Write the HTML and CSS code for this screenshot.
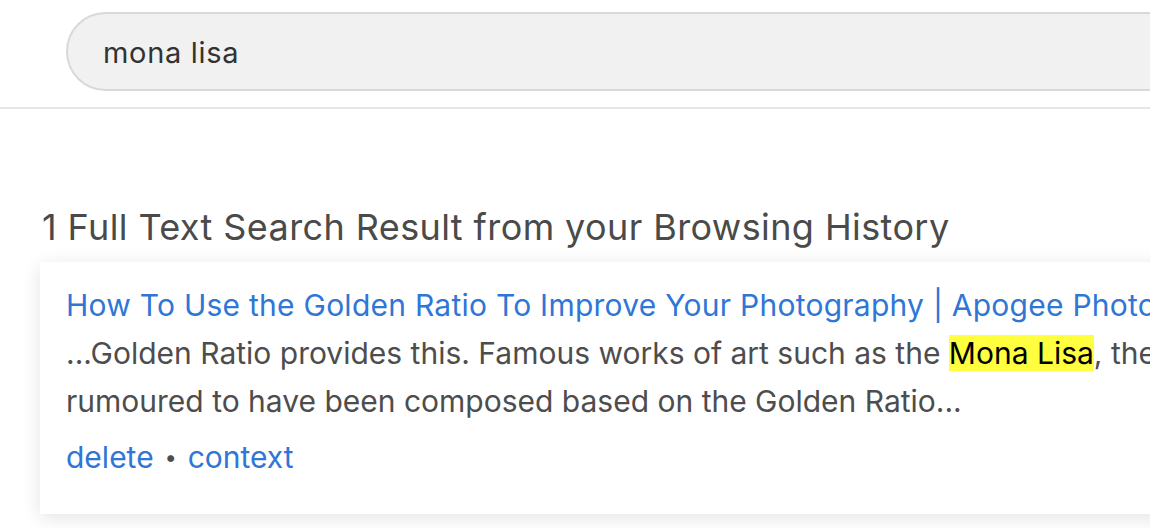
FILE: index.html
```html
<!DOCTYPE html>
<html>
<head>
<meta charset="utf-8">
<link rel="stylesheet" href="styles.css">
</head>
<body>
<header class="topbar">
  <div class="search">mona lisa</div>
</header>
<main class="content">
  <h1 class="heading">1 Full Text Search Result from your Browsing History</h1>
  <div class="card">
    <a class="title" href="#">How To Use the Golden Ratio To Improve Your Photography | Apogee Photo Magazine</a>
    <p class="snippet">...Golden Ratio provides this. Famous works of art such as the <mark class="hl">Mona Lisa</mark>, the Parthenon and the pyramids are<br>rumoured to have been composed based on the Golden Ratio...</p>
    <div class="actions"><a href="#">delete</a><span class="dot">•</span><a href="#">context</a></div>
  </div>
</main>
</body>
</html>
```
FILE: styles.css
```css
html, body {
  margin: 0;
  padding: 0;
  background: #fff;
  overflow: hidden;
  height: 528px;
}
body {
  font-family: Inter, "Liberation Sans", sans-serif;
  width: 1150px;
}
.topbar {
  padding: 12px 0 16px 66px;
  border-bottom: 2px solid #e6e6e6;
}
.search {
  width: 1200px;
  height: 73px;
  box-sizing: content-box;
  border: 2px solid #d9d9d9;
  border-radius: 40px;
  background: #f1f1f1;
  padding: 2px 0 0 35px;
  display: flex;
  align-items: center;
  font-size: 29px;
  letter-spacing: 0.7px;
  color: #333;
}
.content {
  padding: 0 0 0 40px;
}
.heading {
  margin: 98px 0 0 2px;
  font-size: 36px;
  font-weight: 400;
  letter-spacing: 0.4px;
  color: #4a4a4a;
  line-height: 40px;
  white-space: nowrap;
}
.card {
  margin-top: 15px;
  width: 1200px;
  background: #fff;
  box-shadow: 0 4px 18px rgba(0,0,0,0.11);
  padding: 19px 26px 25px 26px;
  white-space: nowrap;
}
.title {
  display: block;
  font-size: 30px;
  letter-spacing: 0.25px;
  line-height: 48px;
  color: #2f76d6;
  text-decoration: none;
}
.snippet {
  margin: 0;
  font-size: 30px;
  line-height: 48px;
  color: #4d4d4d;
}
.hl {
  background: #ffff3f;
  color: #000;
}
.actions {
  font-size: 30px;
  line-height: 64px;
}
.actions a {
  color: #2f76d6;
  text-decoration: none;
}
.dot {
  display: inline-block;
  width: 34px;
  text-align: center;
  color: #4d4d4d;
  font-size: 22px;
  line-height: 1;
  vertical-align: 3px;
}
```
